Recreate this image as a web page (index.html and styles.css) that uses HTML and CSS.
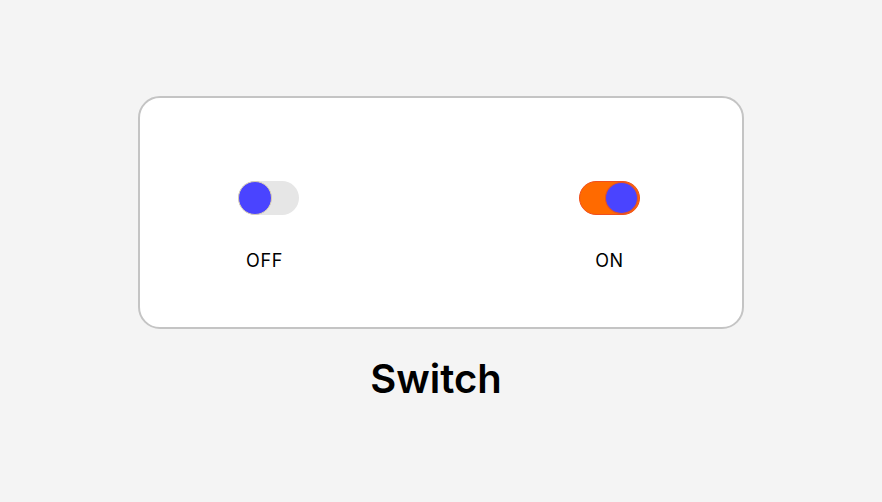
FILE: index.html
```html
<!DOCTYPE html>
<html lang="en">
<head>
<meta charset="utf-8">
<title>Switch</title>
<link rel="stylesheet" href="styles.css">
</head>
<body>
<main class="page">
  <section class="card">
    <div class="item item-off">
      <div class="switch switch-off"><span class="knob"></span></div>
      <span class="label">OFF</span>
    </div>
    <div class="item item-on">
      <div class="switch switch-on"><span class="knob"></span></div>
      <span class="label">ON</span>
    </div>
  </section>
  <h1 class="title">Switch</h1>
</main>
</body>
</html>
```
FILE: styles.css
```css
html, body {
  margin: 0;
  padding: 0;
  height: 100%;
}
body {
  background: #f4f4f4;
  font-family: Inter, "Noto Sans", sans-serif;
  color: #000;
}
.page {
  box-sizing: border-box;
  height: 100%;
  padding-bottom: 3px;
  display: flex;
  flex-direction: column;
  align-items: center;
  justify-content: center;
}
.card {
  box-sizing: border-box;
  width: 606px;
  height: 233px;
  margin-right: 1px;
  background: #fff;
  border: 2px solid #c4c4c4;
  border-radius: 22px;
  display: flex;
  justify-content: space-between;
  align-items: flex-start;
  padding: 83px 102px 0 95px;
}
.item {
  width: 60px;
  display: flex;
  flex-direction: column;
  align-items: center;
  gap: 35px;
}
.item-off .switch {
  margin-left: 7px;
}
.switch {
  box-sizing: border-box;
  flex: none;
  width: 61px;
  height: 34px;
  border-radius: 17px;
  display: flex;
  align-items: center;
  padding: 0;
}
.switch-off {
  background: #e6e6e6;
  justify-content: flex-start;
}
.switch-on {
  background: #ff6a00;
  border: 1px solid #f0501e;
  justify-content: flex-end;
  padding-right: 1px;
}
.knob {
  box-sizing: border-box;
  width: 34px;
  height: 34px;
  border-radius: 50%;
  background: #4a44ff;
}
.switch-off .knob {
  border: 1px solid #d8cdb4;
}
.switch-on .knob {
  width: 33px;
  height: 32px;
  border: 1px solid #e0502a;
}
.label {
  font-size: 18px;
  line-height: 22px;
  letter-spacing: 0.6px;
  white-space: nowrap;
}
.title {
  margin: 26px 10px 0 0;
  font-size: 40px;
  font-weight: 600;
  line-height: 48px;
}
```
